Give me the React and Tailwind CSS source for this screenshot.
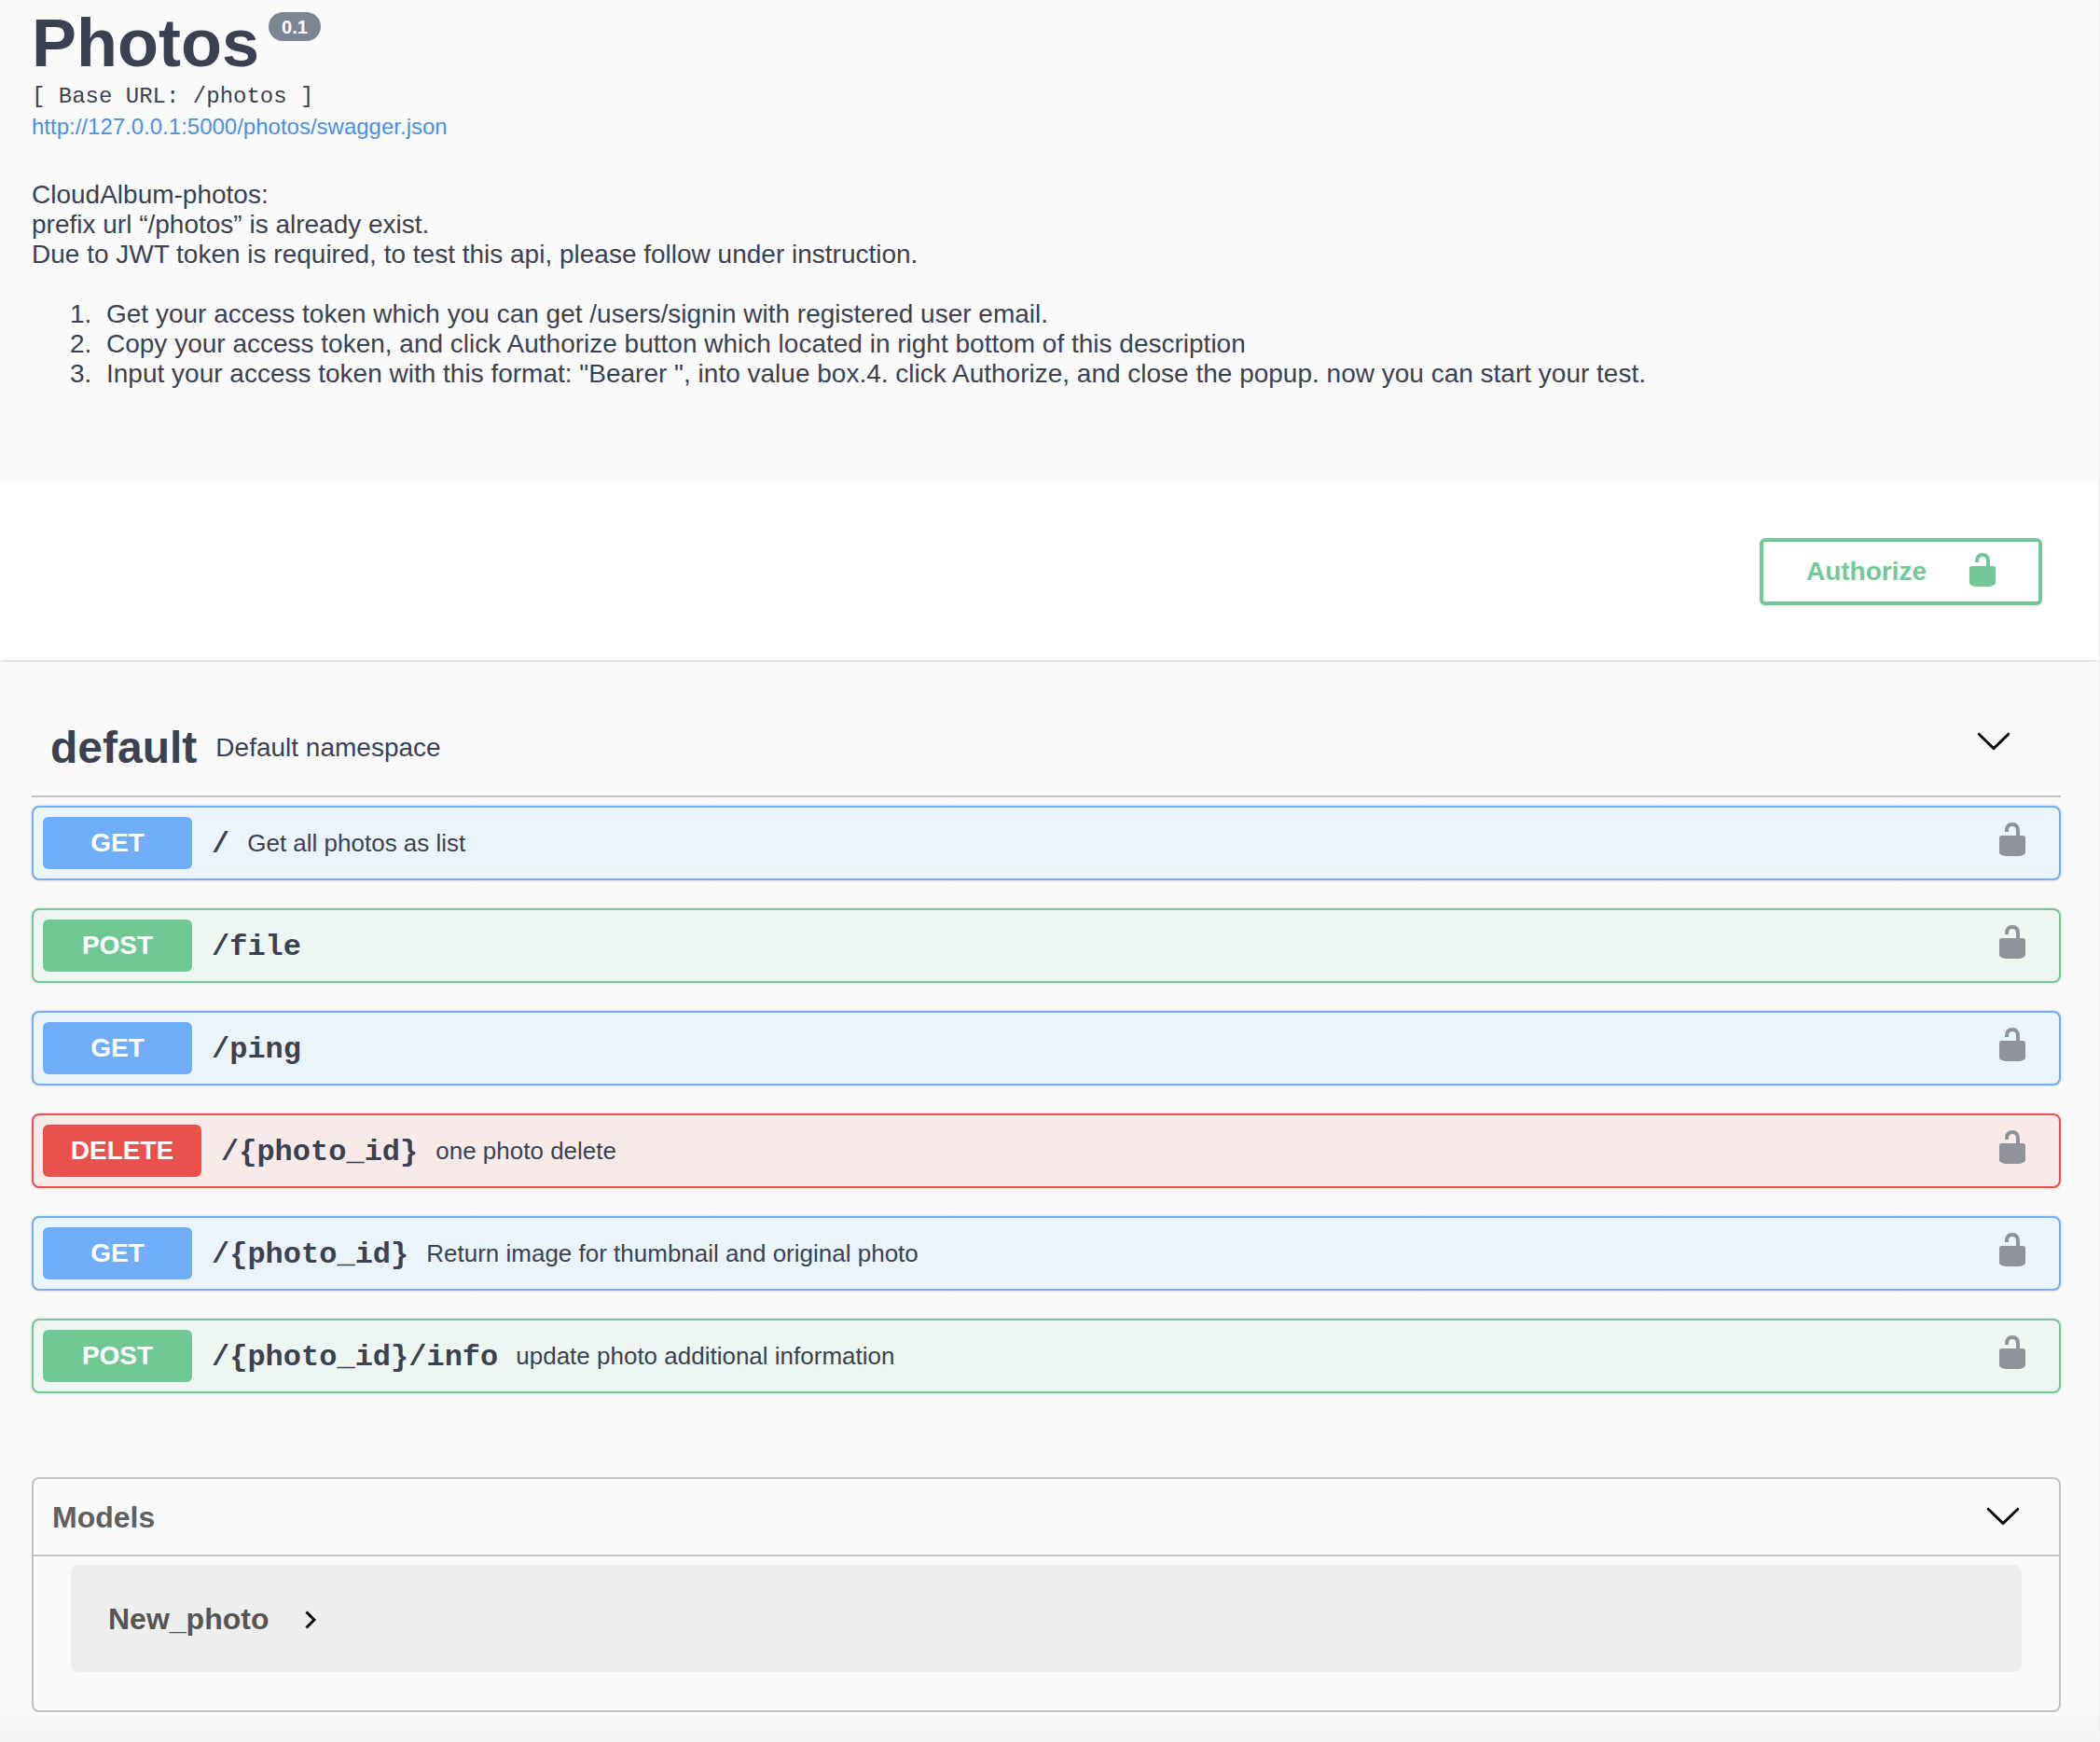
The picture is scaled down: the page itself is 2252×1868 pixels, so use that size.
const sans = "font-['Liberation_Sans',Arial,sans-serif]";

const styles = {
  get: {
    row: "bg-[#ebf3fb] border-[#70adf8]",
    badge: "bg-[#70aef9] w-[160px]",
  },
  post: {
    row: "bg-[#edf6f1] border-[#72c995]",
    badge: "bg-[#70c995] w-[160px]",
  },
  delete: {
    row: "bg-[#f8eae8] border-[#e9514d]",
    badge: "bg-[#e9514d] w-[170px]",
  },
};

const endpoints = [
  { method: "get", path: "/", desc: "Get all photos as list" },
  { method: "post", path: "/file", desc: "" },
  { method: "get", path: "/ping", desc: "" },
  { method: "delete", path: "/{photo_id}", desc: "one photo delete" },
  { method: "get", path: "/{photo_id}", desc: "Return image for thumbnail and original photo" },
  { method: "post", path: "/{photo_id}/info", desc: "update photo additional information" },
];

const steps = [
  "Get your access token which you can get /users/signin with registered user email.",
  "Copy your access token, and click Authorize button which located in right bottom of this description",
  'Input your access token with this format: "Bearer ", into value box.4. click Authorize, and close the popup. now you can start your test.',
];

function Lock({ className }) {
  return (
    <svg viewBox="0 0 20 20" className={className} fill="currentColor">
      <path d="M15.8 8H14V5.6C14 2.703 12.665 1 10 1 7.334 1 6 2.703 6 5.6V6h2v-.801C8 3.754 8.797 3 10 3c1.203 0 2 .754 2 2.199V8H4c-.553 0-1 .646-1 1.199V17c0 .549.428 1.139.951 1.307l1.197.387C5.672 18.861 6.55 19 7.1 19h5.8c.549 0 1.428-.139 1.951-.307l1.196-.387c.524-.167.953-.757.953-1.306V9.199C17 8.646 16.352 8 15.8 8z" />
    </svg>
  );
}

function ArrowDown() {
  return (
    <svg viewBox="0 0 20 20" className="w-10 h-10 text-black" fill="currentColor">
      <path d="M17.418 6.109c.272-.268.709-.268.979 0s.271.701 0 .969l-7.908 7.83c-.27.268-.707.268-.979 0l-7.908-7.83c-.27-.268-.27-.701 0-.969.271-.268.709-.268.979 0L10 13.25l7.418-7.141z" />
    </svg>
  );
}

function Endpoint({ method, path, desc }) {
  const s = styles[method];
  return (
    <div className={`h-[80px] mb-[30px] flex items-center border-2 rounded-lg pl-[10px] pr-[30px] shadow-[0_0_3px_rgba(0,0,0,0.19)] ${s.row}`}>
      <span className={`h-[56px] flex items-center justify-center rounded-md text-white font-bold text-[28px] ${s.badge}`}>
        {method.toUpperCase()}
      </span>
      <span className="ml-[21px] mt-[3px] font-['Liberation_Mono',monospace] font-bold text-[32px] text-[#3b4151]">{path}</span>
      <span className="ml-[19px] text-[26px] text-[#3b4151]">{desc}</span>
      <Lock className="ml-auto -mt-[8px] w-10 h-10 text-[#90949a]" />
    </div>
  );
}

export default function App() {
  return (
    <div className={`${sans} w-[2252px] h-[1868px] border-r-2 border-[#f2f2f2] bg-linear-to-b from-[#fafafa] from-[1835px] to-[#f3f3f3] text-[#3b4151] overflow-hidden`}>
      {/* info block */}
      <div className="h-[517px] pl-[34px] pt-[4px]">
        <div className="flex items-start">
          <h1 className="font-bold text-[72px] leading-[84px]">Photos</h1>
          <span className="ml-[10px] mt-[9px] h-[31px] w-[56px] rounded-full bg-[#7d8492] text-white font-bold text-[20px] flex items-center justify-center">
            0.1
          </span>
        </div>
        <div className="font-['Liberation_Mono',monospace] text-[24px] leading-[32px]">[ Base URL: /photos ]</div>
        <a className="block text-[24px] leading-[32px] text-[#4990e2]">http://127.0.0.1:5000/photos/swagger.json</a>
        <div className="mt-[41px] text-[28px] leading-[32px]">
          <p>CloudAlbum-photos:</p>
          <p>prefix url “/photos” is already exist.</p>
          <p>Due to JWT token is required, to test this api, please follow under instruction.</p>
          <ol className="mt-[32px] pl-[41px]">
            {steps.map((step, i) => (
              <li key={i} className="flex">
                <span className="w-[39px] shrink-0">{i + 1}.</span>
                <span>{step}</span>
              </li>
            ))}
          </ol>
        </div>
      </div>

      {/* authorize bar */}
      <div className="relative h-[191px] bg-white shadow-[0_2px_2px_-1px_rgba(0,0,0,0.2)] flex items-center justify-end pr-[60px]">
        <button className="w-[303px] h-[72px] pl-[6px] border-[4px] border-[#72c995] rounded-md flex items-center justify-center gap-[40px] text-[#72c995] font-bold text-[28px] shadow-[0_1px_2px_rgba(0,0,0,0.1)]">
          Authorize
          <Lock className="-mt-[4px] w-10 h-10" />
        </button>
      </div>

      {/* operations */}
      <div className="pl-[34px] pr-[40px]">
        <div className="h-[147px] pl-[20px] pr-[52px] flex items-end pb-[17px] border-b-2 border-[#c1c1c6] mb-[9px]">
          <div className="flex items-center w-full h-[68px]">
            <span className="font-bold text-[48px]">default</span>
            <span className="ml-[20px] text-[28px]">Default namespace</span>
            <span className="ml-auto -mt-[16px]"><ArrowDown /></span>
          </div>
        </div>
        {endpoints.map((e, i) => (
          <Endpoint key={i} {...e} />
        ))}

        <div className="mt-[90px] h-[252px] border-2 border-[#c1c1c6] rounded-lg bg-[#fafafa]">
          <div className="h-[83px] border-b-2 border-[#c1c1c6] pl-[20px] pr-[40px] flex items-center justify-between">
            <span className="font-bold text-[32px] text-[#606060]">Models</span>
            <span className="-mt-[3px]"><ArrowDown /></span>
          </div>
          <div className="ml-[40px] mr-[40px] mt-[9px] h-[115px] bg-[#eeeeee] rounded-lg pl-[40px] flex items-center gap-[39px]">
            <span className="font-bold text-[32px] text-[#555555]">New_photo</span>
            <svg viewBox="0 0 12 20" className="w-[12px] h-[20px] mt-[3px]" fill="none" stroke="black" strokeWidth="3">
              <path d="M1.5 1.5 10 10 1.5 18.5" />
            </svg>
          </div>
        </div>
      </div>
    </div>
  );
}
